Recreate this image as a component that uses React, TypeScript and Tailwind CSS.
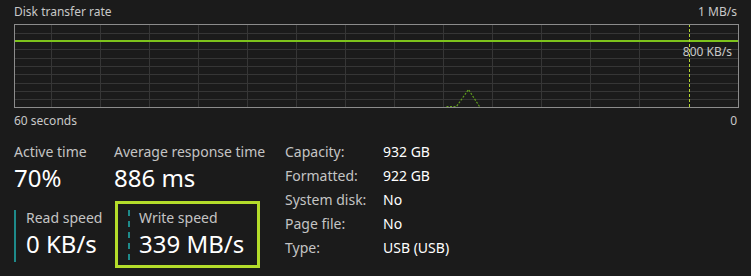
const font = { fontFamily: '"Noto Sans", "Open Sans", sans-serif' };

const vLines = Array.from({ length: 13 }, (_, i) => 37.5 + i * 49);
const hLines = [9.5, 25.5, 34.5, 42.5, 50.5, 59.5, 67.5, 75.5];

function TransferGraph() {
  return (
    <div className="relative h-[84px] w-full">
      <svg width="725" height="84" viewBox="0 0 725 84" className="block">
        {hLines.map((y) => (
          <line key={y} x1="0" x2="725" y1={y} y2={y} stroke="#363636" strokeWidth="1" />
        ))}
        {vLines.map((x) => (
          <line key={x} x1={x} x2={x} y1="0" y2="84" stroke="#363636" strokeWidth="1" />
        ))}
        <line x1="0" x2="725" y1="17" y2="17" stroke="#7dc31c" strokeWidth="2" />
        <polyline
          points="432.5,82.5 442.5,82.5 454.5,65.5 465.5,82.5"
          fill="none"
          stroke="#5f9d1c"
          strokeWidth="1.2"
          strokeDasharray="2 1.5"
        />
        <line x1="675.5" x2="675.5" y1="0" y2="84" stroke="#b4d532" strokeWidth="1" strokeDasharray="3 2" />
        <rect x="0.5" y="0.5" width="724" height="83" fill="none" stroke="#8c8c8c" strokeWidth="1" />
      </svg>
      <span className="absolute right-[5px] top-[20px] text-[12px] leading-4 text-[#c8c8c8]">800 KB/s</span>
    </div>
  );
}

function Stat({ label, value }: { label: string; value: string }) {
  return (
    <div className="whitespace-nowrap">
      <div className="text-[14px] leading-[18px] text-[#c4c4c4]">{label}</div>
      <div className="text-[24px] leading-[34px] text-white">{value}</div>
    </div>
  );
}

const props: [string, string][] = [
  ['Capacity:', '932 GB'],
  ['Formatted:', '922 GB'],
  ['System disk:', 'No'],
  ['Page file:', 'No'],
  ['Type:', 'USB (USB)'],
];

export default function App() {
  return (
    <div className="h-[276px] w-[751px] overflow-hidden bg-[#1b1b1b] px-[14px]" style={font}>
      <div className="flex h-[24px] items-center justify-between text-[12px] text-[#c8c8c8]">
        <span>Disk transfer rate</span>
        <span>1 MB/s</span>
      </div>
      <TransferGraph />
      <div className="flex h-[26px] items-center justify-between text-[12px] text-[#c8c8c8]">
        <span>60 seconds</span>
        <span>0</span>
      </div>

      <div className="mt-[9px] flex items-start">
        <div className="w-[271px]">
          <div className="flex">
            <div className="w-[100px]">
              <Stat label="Active time" value="70%" />
            </div>
            <Stat label="Average response time" value="886 ms" />
          </div>
          <div className="mt-[6px] flex">
            <div className="mt-[9px] flex h-[52px] w-[101px]">
              <div className="w-[2px] bg-[#1e8a8a]" />
              <div className="-mt-[1px] pl-[10px]">
                <Stat label="Read speed" value="0 KB/s" />
              </div>
            </div>
            <div className="flex h-[67px] w-[145px] border-[3px] border-[#b4dc2a] px-[10px] pt-[6px]">
              <div className="h-[50px] w-0 border-l-2 border-dashed border-[#1e8a8a]" />
              <div className="-mt-[1px] pl-[9px]">
                <Stat label="Write speed" value="339 MB/s" />
              </div>
            </div>
          </div>
        </div>
        <div className="-mt-[3px] grid grid-cols-[98px_auto] content-start text-[14px] leading-[24px]">
          {props.map(([k, v]) => (
            <div key={k} className="contents">
              <span className="text-[#c4c4c4]">{k}</span>
              <span className="text-white">{v}</span>
            </div>
          ))}
        </div>
      </div>
    </div>
  );
}
